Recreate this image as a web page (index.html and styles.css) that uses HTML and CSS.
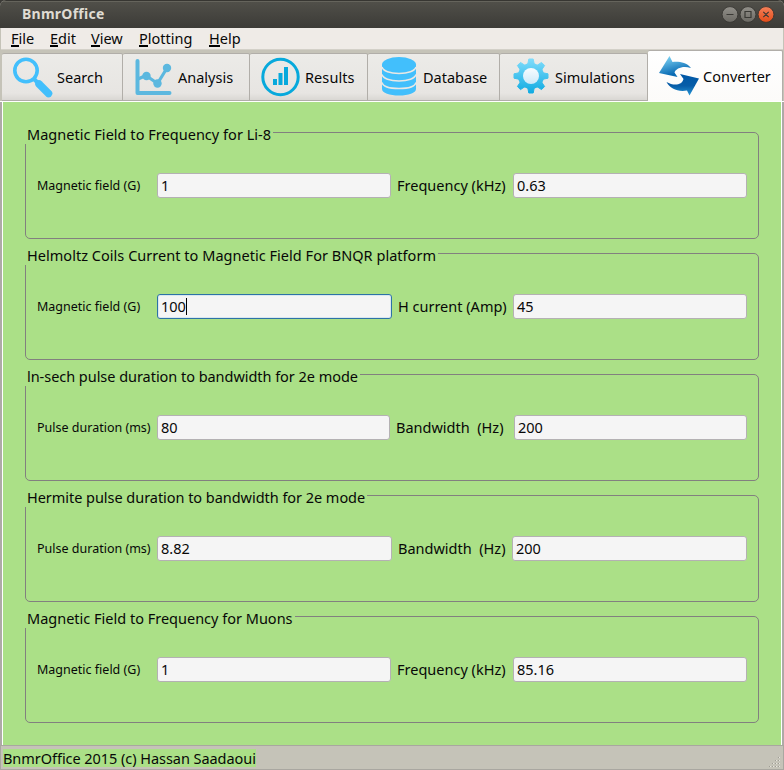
FILE: index.html
```html
<!DOCTYPE html>
<html lang="en">
<head>
<meta charset="utf-8">
<title>BnmrOffice</title>
<link rel="stylesheet" href="styles.css">
</head>
<body>
<div class="window">
  <header class="titlebar">
    <span class="title">BnmrOffice</span>
    <svg class="controls" width="54" height="18" viewBox="0 0 54 18">
      <defs>
        <linearGradient id="gray" x2="0" y2="1"><stop stop-color="#92908a"/><stop offset="1" stop-color="#6b6963"/></linearGradient>
        <linearGradient id="red" x2="0" y2="1"><stop stop-color="#f5815a"/><stop offset="1" stop-color="#e24b18"/></linearGradient>
      </defs>
      <g stroke="#32312d" stroke-width=".8">
        <circle cx="9" cy="8.500" r="7.900" fill="url(#gray)"/>
        <circle cx="27" cy="8.500" r="7.900" fill="url(#gray)"/>
        <circle cx="45" cy="8.500" r="7.900" fill="url(#red)"/>
      </g>
      <path d="M5.500 8.500h7M24 5.500h6v6h-6zM42.300 5.800l5.400 5.400M47.700 5.800l-5.400 5.400" fill="none" stroke="#3a3935" stroke-width="1.200"/>
    </svg>
  </header>
  <nav class="menubar">
    <span class="m-file"><b>F</b>ile</span>
    <span class="m-edit"><b>E</b>dit</span>
    <span class="m-view"><b>V</b>iew</span>
    <span class="m-plot"><b>P</b>lotting</span>
    <span class="m-help"><b>H</b>elp</span>
  </nav>
  <div class="tabs">
    <div class="tab t-search">
      <svg width="42" height="42" viewBox="0 0 42 42"><circle cx="14" cy="14.500" r="11.200" fill="none" stroke="#42bffc" stroke-width="3.600"/><path d="M22.500 23.500l5 5" stroke="#42bffc" stroke-width="4"/><path d="M27 28l9.500 9.500" stroke="#42bffc" stroke-width="7.500" stroke-linecap="round"/></svg>
      <span>Search</span>
    </div>
    <div class="tab t-analysis">
      <svg width="42" height="42" viewBox="0 0 42 42"><g fill="none" stroke="#5cb8df" stroke-linecap="round" stroke-linejoin="round"><path d="M4.500 5v32h32" stroke-width="4"/><path d="M5 23l8-3.500 11.500 8L34 12" stroke-width="3.200"/></g><g fill="#5cb8df"><circle cx="13.500" cy="20" r="4.200"/><circle cx="24.500" cy="27.500" r="4.200"/><circle cx="34" cy="12" r="4.200"/></g></svg>
      <span>Analysis</span>
    </div>
    <div class="tab t-results">
      <svg width="42" height="42" viewBox="0 0 42 42"><circle cx="20.500" cy="21" r="17.700" fill="none" stroke="#07a9dc" stroke-width="3"/><path d="M13 23h4v6h-4zM18.500 17h4v12h-4zM24 11h4v18h-4z" fill="#07a9dc"/></svg>
      <span>Results</span>
    </div>
    <div class="tab t-database">
      <svg width="42" height="42" viewBox="0 0 42 42"><path d="M4 9v24c0 4 7.600 6.500 17 6.500s17-2.500 17-6.500V9z" fill="#42bffc"/><ellipse cx="21" cy="8.500" rx="17" ry="7.500" fill="#42bffc"/><path d="M4 11c1 4 8 6.500 17 6.500s16-2.500 17-6.500M4 18.500c1 4 8 6.500 17 6.500s16-2.500 17-6.500M4 26.500c1 4 8 6 17 6s16-2 17-6" fill="none" stroke="#e9e8e5" stroke-width="1.500"/></svg>
      <span>Database</span>
    </div>
    <div class="tab t-sim">
      <svg width="42" height="42" viewBox="0 0 42 42">
        <defs><linearGradient id="gear" gradientUnits="userSpaceOnUse" x1="21" y1="4" x2="21" y2="38"><stop stop-color="#7fdcfb"/><stop offset="1" stop-color="#10abe2"/></linearGradient><linearGradient id="hub" x2="0" y2="1"><stop stop-color="#f8fcff"/><stop offset="1" stop-color="#cde9f8"/></linearGradient></defs>
        <g transform="translate(0 -1)">
        <circle cx="21" cy="21" r="13" fill="url(#gear)"/>
        <path d="M17.800 9l1-5h4.400l1 5zM17.800 33l1 5h4.400l1-5zM9 17.800l-5 1v4.400l5 1zM33 17.800l5 1v4.400l-5 1zM10.400 15l-3-4.500 3.100-3.100 4.500 3zM27 10.400l4.500-3 3.100 3.100-3 4.500zM31.600 27l3 4.500-3.100 3.100-4.500-3zM15 31.600l-4.500 3-3.100-3.100 3-4.500z" fill="url(#gear)" stroke="url(#gear)" stroke-linejoin="round"/>
        <circle cx="21" cy="21" r="8" fill="url(#hub)"/>
        </g>
      </svg>
      <span>Simulations</span>
    </div>
    <div class="tab active t-conv">
      <svg width="42" height="42" viewBox="0 0 42 42">
        <defs><linearGradient id="upper" x2=".4" y2="1"><stop stop-color="#8be0fc"/><stop offset=".9" stop-color="#096bb4"/></linearGradient><linearGradient id="lower" x2="0" y2="1"><stop stop-color="#0057a6"/><stop offset=".55" stop-color="#075da8"/><stop offset="1" stop-color="#2797d6"/></linearGradient></defs>
        <path d="M11.500 1L1 18l18.500 4-3-4.500c1.500-4 8-7 16.500-4.500C28 7 21 6.500 14.500 7z" fill="url(#upper)"/>
        <path d="M22 19l19 4.500L31.500 40.500 29 35.500C20 37 12 34 8.500 27c7 4 15.500 3.500 17-3z" fill="url(#lower)"/>
      </svg>
      <span>Converter</span>
    </div>
  </div>
  <main class="pane">
    <section class="group">
      <h2 class="g1">Magnetic Field to Frequency for Li-8</h2>
      <div class="row"><label class="mag">Magnetic field (G)</label><div class="field">1</div><label class="unit freq">Frequency (kHz)</label><div class="field">0.63</div></div>
    </section>
    <section class="group">
      <h2 class="g2">Helmoltz Coils Current to Magnetic Field For BNQR platform</h2>
      <div class="row wide-in"><label class="mag">Magnetic field (G)</label><div class="field focus">100<i class="caret"></i></div><label class="unit amp">H current (Amp)</label><div class="field">45</div></div>
    </section>
    <section class="group">
      <h2 class="g3">ln-sech pulse duration to bandwidth for 2e mode</h2>
      <div class="row narrow-in"><label class="pulse">Pulse duration (ms)</label><div class="field">80</div><label class="unit band">Bandwidth&nbsp; (Hz)</label><div class="field">200</div></div>
    </section>
    <section class="group">
      <h2 class="g4">Hermite pulse duration to bandwidth for 2e mode</h2>
      <div class="row wide-both"><label class="pulse">Pulse duration (ms)</label><div class="field">8.82</div><label class="unit band">Bandwidth&nbsp; (Hz)</label><div class="field">200</div></div>
    </section>
    <section class="group">
      <h2 class="g5">Magnetic Field to Frequency for Muons</h2>
      <div class="row"><label class="mag">Magnetic field (G)</label><div class="field">1</div><label class="unit freq">Frequency (kHz)</label><div class="field">85.16</div></div>
    </section>
  </main>
  <footer class="status">
    <span>BnmrOffice 2015 (c) Hassan Saadaoui</span>
    <svg width="12" height="12" viewBox="0 0 12 12"><path d="M10 1.500h1M7 4.500h1M10 4.500h1M4 7.500h1M7 7.500h1M10 7.500h1M1 10.500h1M4 10.500h1M7 10.500h1M10 10.500h1" stroke="#e6e4dd"/><path d="M9 1.500h1M6 4.500h1M9 4.500h1M3 7.500h1M6 7.500h1M9 7.500h1M0 10.500h1M3 10.500h1M6 10.500h1M9 10.500h1" stroke="#9f9d95"/></svg>
  </footer>
</div>
</body>
</html>
```
FILE: styles.css
```css
* { box-sizing: border-box; }
body { margin: 0; background: #3c3b37; }
.window {
  width: 784px; height: 770px; display: flex; flex-direction: column;
  font: 14.5px/20px "Noto Sans", sans-serif; color: #080808; white-space: nowrap;
  background: #c5c3b8; border-radius: 6px 6px 0 0; overflow: hidden;
}
.titlebar {
  height: 28px; display: flex; align-items: center; justify-content: space-between;
  padding: 0 9px 0 22px; border-top: 1px solid #373632;
  background: linear-gradient(#65645c 0 1px, #504f49 1px, #3c3b37); color: #dfdbd2;
}
.title { font-weight: 700; font-size: 14px; letter-spacing: .25px; margin-top: -2px; }
.menubar {
  height: 22px; display: flex; align-items: center; padding: 0 0 2px 10px; margin: 0 1px;
  background: #efebe7; border-bottom: 1px solid #d3d0c8;
}
.menubar b {
  display: inline-block; height: 19px; font-weight: 400; line-height: 20px;
  box-shadow: 0 -1px 0 #000 inset; border-bottom: 1px solid #000;
}
.m-file { width: 39px; }
.m-edit { width: 41px; }
.m-view { width: 48px; }
.m-plot { width: 70px; }
.tabs { height: 52px; display: flex; align-items: flex-end; padding: 0 1px 0 2px; border-bottom: 1px solid #fff; }
.tab {
  height: 48px; display: flex; align-items: center; border: 1px solid #b1aea9; border-left: 0;
  border-radius: 2px 2px 0 0; background: linear-gradient(#ecebe8, #e7e5e2 85%, #d9d7d3);
}
.tab svg { flex: none; margin-top: -1px; }
.tab span { margin-left: 3px; }
.t-search { width: 121px; padding-left: 10px; }
.t-analysis { width: 127px; padding-left: 10px; }
.t-results { width: 118px; padding-left: 10px; letter-spacing: .08px; }
.t-database { width: 132px; padding-left: 10px; }
.t-sim { width: 148px; padding-left: 10px; }
.t-conv { width: 135px; padding-left: 10px; }
.tab.active { height: 51px; background: linear-gradient(#fff, #fcfbf9); border-bottom: 0; }
.pane {
  height: 643px; padding: 30px 23px 0 22px; margin: 0 2px;
  display: flex; flex-direction: column; gap: 14px;
  background: #abe087; border: solid #fff; border-width: 0 1px;
  box-shadow: 2px 0 #aeaaa7, -2px 0 #aeaaa7;
}
.group { width: 734px; height: 107px; border: 1px solid #82807f; border-radius: 5px; }
.group h2 {
  width: fit-content; height: 20px; margin: -9px 0 0 -1px; padding: 0 2px;
  background: #abe087; font: inherit;
}
.g1, .g2 { letter-spacing: .03px; }
.group .g3, .group .g4 { letter-spacing: -.04px; }
.row {
  display: grid; grid-template-columns: 114px 234px 110px 234px; column-gap: 6px;
  align-items: center; margin: 29px 0 0 11px;
}
.wide-in { grid-template-columns: 114px 235px 109px 234px; }
.narrow-in { grid-template-columns: 114px 233px 112px 233px; }
.wide-both { grid-template-columns: 114px 235px 108px 235px; }
.row label { font-size: 12.5px; padding-top: 1px; }
.row .unit { font-size: 14.5px; padding: 0 0 2px; }
.field {
  height: 25px; display: flex; align-items: center; padding: 0 0 2px 3px;
  background: #f5f5f5; border: 1px solid #b4b1b3; border-radius: 3px;
}
.field.focus { border-color: #2d72a6; box-shadow: inset 0 0 0 1px #d9e7ef; }
.caret { width: 1px; height: 17px; margin-top: 1px; background: #000; }
.status {
  height: 25px; display: flex; justify-content: space-between; align-items: flex-end;
  padding: 0 2px 1px; background: #c5c3b8; border: 1px solid #a9a7a0;
}
.status span { height: 18px; line-height: 18px; margin-bottom: 1px; background: #abe087; letter-spacing: -.05px; }
```
